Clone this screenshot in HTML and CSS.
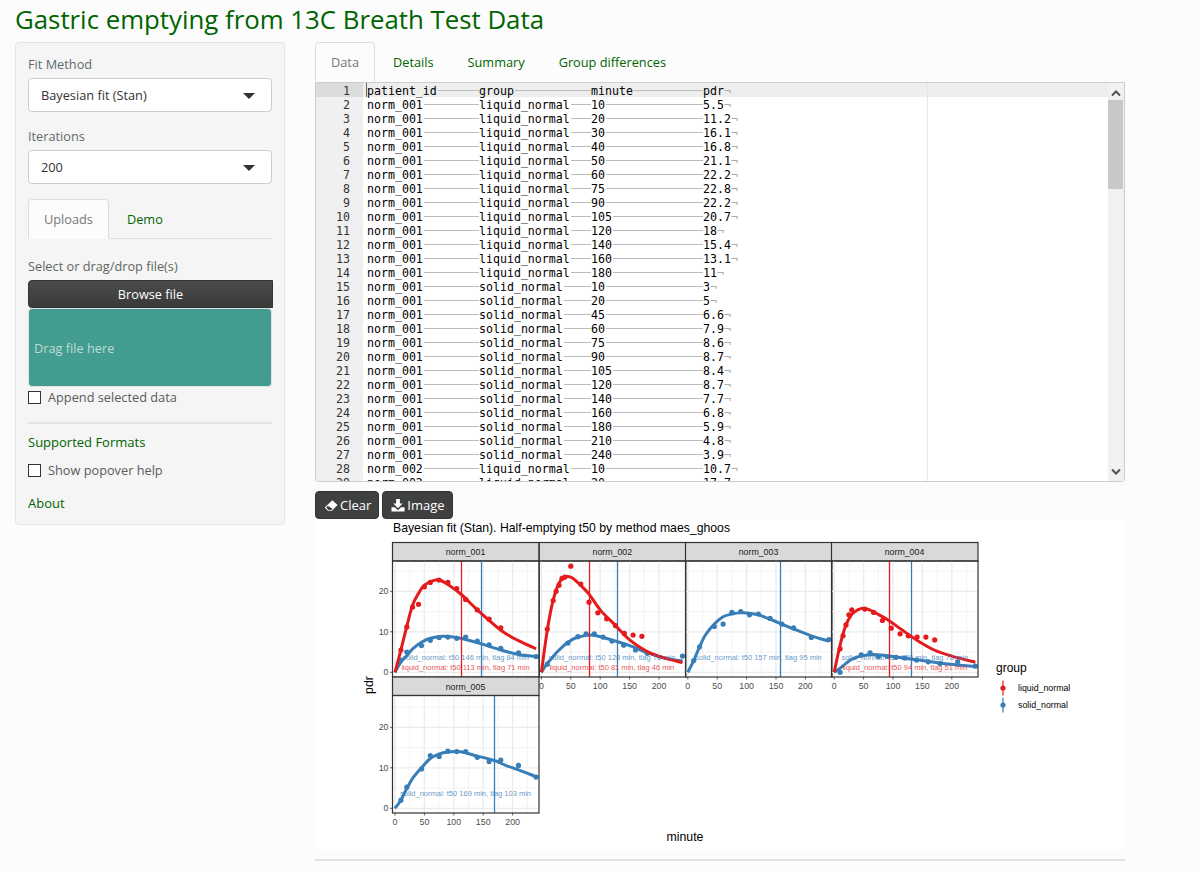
FILE: index.html
```html
<!DOCTYPE html>
<html>

<head>
    <meta charset="utf-8">
    <title>Gastric emptying from 13C Breath Test Data</title>
    <link rel="stylesheet" href="styles.css">
</head>

<body>
    <h2 class="page-title">Gastric emptying from 13C Breath Test Data</h2>

    <div class="layout">
        <div class="well">
            <label class="field-label">Fit Method</label>
            <div class="select-box">Bayesian fit (Stan)</div>

            <label class="field-label">Iterations</label>
            <div class="select-box">200</div>

            <ul class="tabs side-tabs">
                <li class="tab active">Uploads</li>
                <li class="tab">Demo</li>
            </ul>

            <label class="field-label upload-label">Select or drag/drop file(s)</label>
            <button type="button" class="btn browse-btn">Browse file</button>
            <div class="drop-area">Drag file here</div>

            <label class="check-row"><input type="checkbox">Append selected data</label>
            <hr class="side-rule">

            <a class="link formats-link">Supported Formats</a>
            <label class="check-row popover-row"><input type="checkbox">Show popover help</label>
            <a class="link about-link">About</a>
        </div>

        <div class="main">
            <ul class="tabs main-tabs">
                <li class="tab active">Data</li>
                <li class="tab">Details</li>
                <li class="tab">Summary</li>
                <li class="tab">Group differences</li>
            </ul>

            <div class="editor">
                <div class="gutter" id="gutter"></div>
                <div class="code" id="code"></div>
                <div class="print-margin"></div>
                <div class="scrollbar">
                    <svg class="arrow" width="12" height="8" viewBox="0 0 12 8"><path d="M2 6.5L6 2.5L10 6.5" fill="none" stroke="#505050" stroke-width="2" /></svg>
                    <div class="thumb"></div>
                    <svg class="arrow arrow-down" width="12" height="8" viewBox="0 0 12 8"><path d="M2 1.5L6 5.5L10 1.5" fill="none" stroke="#505050" stroke-width="2" /></svg>
                </div>
            </div>

            <div class="plot-actions">
                <button type="button" class="btn action-btn">
                    <svg width="14" height="13" viewBox="0 0 16 14"><path fill="#fff" fill-rule="evenodd" d="M9.5 1L15.5 6.5L9 13H4.5L.8 9.4ZM4.2 7.4L2.6 9.3L5.2 12H8.4L9.8 10.7Z" /></svg>
                    Clear
                </button>
                <button type="button" class="btn action-btn">
                    <svg width="14" height="14" viewBox="0 0 15 15"><path fill="#fff" d="M5.5 1H9.5V6H12.5L7.5 11L2.5 6H5.5ZM.5 10H4L7.5 13L11 10H14.5V14.5H.5Z" /></svg>
                    Image
                </button>
            </div>

            <svg class="plot" id="plot" width="810" height="331" viewBox="315 519 810 331"></svg>
            <hr class="main-rule">
        </div>
    </div>

    <script src="script.js"></script>
</body>

</html>
```

FILE: styles.css
```css
body {
    margin: 0;
    padding: 0 15px;
    background-color: #fcfcfc;
    font-family: "Open Sans", sans-serif;
    font-size: 12.75px;
    line-height: 18px;
    color: #555;
    overflow: hidden;
}

.page-title {
    margin: 5px 0 8px;
    font-size: 25.8px;
    font-weight: 400;
    line-height: 29px;
    color: #006400;
}

.layout {
    display: grid;
    grid-template-columns: 270px 810px;
    column-gap: 30px;
    align-items: start;
}

.well {
    display: flex;
    flex-direction: column;
    align-items: flex-start;
    padding: 12px;
    background-color: #f5f5f5;
    border: 1px solid #e3e3e3;
    border-radius: 4px;
}

.field-label {
    margin-bottom: 5px;
    color: #5d6b70;
}

.select-box {
    box-sizing: border-box;
    position: relative;
    width: 100%;
    height: 34px;
    margin-bottom: 15px;
    padding: 7px 12px;
    background-color: #fff;
    border: 1px solid #ccc;
    border-radius: 4px;
    color: #333;
}

.select-box::after {
    content: "";
    position: absolute;
    top: 14px;
    right: 16px;
    border-left: 6px solid transparent;
    border-right: 6px solid transparent;
    border-top: 6px solid #333;
}

.tabs {
    display: flex;
    box-sizing: border-box;
    width: 100%;
    margin: 0;
    padding: 0;
    list-style: none;
    border-bottom: 1px solid #ddd;
}

.tab {
    padding: 10px 15px;
    margin-bottom: -1px;
    border: 1px solid transparent;
    border-radius: 4px 4px 0 0;
    color: #006400;
    margin-right: 2px;
}

.tab.active {
    background-color: #fcfcfc;
    border-color: #ddd #ddd #fcfcfc;
    color: #777;
}

.side-tabs {
    height: 40px;
}

.upload-label {
    margin-top: 18px;
    color: #5e6660;
}

.btn {
    font-family: "Open Sans", sans-serif;
    font-size: 12.75px;
    color: #fff;
    background-color: #3f4040;
    border: 1px solid #333;
    border-radius: 4px;
    cursor: pointer;
}

.browse-btn {
    width: 245px;
    height: 28px;
    padding: 0;
    border-radius: 4px 0 0 4px;
    background-image: linear-gradient(#4a4b4b, #3a3a3a);
}

.drop-area {
    box-sizing: border-box;
    display: flex;
    align-items: center;
    width: 244px;
    height: 79px;
    margin-bottom: 1px;
    padding-left: 5px;
    background-color: #429c8f;
    border: 1px solid #e3e3e3;
    border-radius: 4px;
    color: #bcdcd6;
}

.check-row {
    display: flex;
    align-items: center;
    gap: 7px;
    color: #5a5a5a;
}

.check-row input {
    appearance: none;
    width: 13px;
    height: 13px;
    margin: 0;
    background-color: #fff;
    border: 1px solid #333;
}

.side-rule {
    width: 100%;
    margin: 16px 0 9px;
    border: none;
    border-top: 2px solid #e3e3e3;
}

.link {
    font-size: 13px;
    color: #006400;
}

.popover-row {
    margin-top: 10px;
}

.about-link {
    margin-top: 15px;
}

.main-tabs {
    height: 40px;
    border-bottom: none;
}

.main-tabs .tab {
    height: 40px;
    box-sizing: border-box;
    margin-bottom: 0;
}

.editor {
    display: flex;
    position: relative;
    box-sizing: border-box;
    height: 400px;
    overflow: hidden;
    background-color: #fff;
    border: 1px solid #ccc;
    border-radius: 0 0 4px 4px;
    font-family: "DejaVu Sans Mono", monospace;
    font-size: 11.6px;
    line-height: 16px;
    color: #000;
}

.gutter {
    flex: 0 0 47px;
    background-color: #f0f0f0;
    color: #333;
    text-align: right;
}

.gutter div {
    height: 14px;
    padding-right: 13px;
}

.gutter .current {
    background-color: #dcdcdc;
}

.code {
    flex: 1;
}

.code-line {
    display: flex;
    height: 14px;
    padding-left: 4px;
    white-space: pre;
}

.code-line.current {
    background: linear-gradient(#666, #666) 3px 0 / 1px 100% no-repeat #eee;
}

.cell {
    display: flex;
    align-items: flex-start;
    flex: 0 0 112px;
}

.cell::after {
    content: "";
    flex: 1;
    margin: 7px 0 0 1px;
    border-top: 1px solid #bcbcbc;
}

.eol {
    color: #aaa;
}

.print-margin {
    position: absolute;
    top: 0;
    bottom: 0;
    left: 611px;
    border-left: 1px solid #e6e6e6;
}

.scrollbar {
    flex: 0 0 16px;
    position: relative;
    background-color: #f1f1f1;
    z-index: 1;
}

.arrow {
    position: absolute;
    top: 6px;
    left: 2px;
}

.arrow-down {
    top: auto;
    bottom: 5px;
}

.thumb {
    position: absolute;
    top: 17px;
    left: 0;
    width: 15px;
    height: 89px;
    background-color: #c8c8c8;
}

.plot-actions {
    display: flex;
    gap: 3px;
    margin-top: 9px;
}

.action-btn {
    display: flex;
    align-items: center;
    gap: 2px;
    height: 28px;
    padding: 0 7px 0 8px;
    font-size: 13px;
}

.plot {
    display: block;
    background-color: #fff;
    font-family: "Liberation Sans", sans-serif;
}

.main-rule {
    margin: 9px 0 0;
    border: none;
    border-top: 2px solid #e3e3e3;
}
```

FILE: script.js
```js
const blocks = [
    ['norm_001', 'liquid_normal', [10, 5.5], [20, 11.2], [30, 16.1], [40, 16.8], [50, 21.1], [60, 22.2], [75, 22.8], [90, 22.2], [105, 20.7], [120, 18], [140, 15.4], [160, 13.1], [180, 11]],
    ['norm_001', 'solid_normal', [10, 3], [20, 5], [45, 6.6], [60, 7.9], [75, 8.6], [90, 8.7], [105, 8.4], [120, 8.7], [140, 7.7], [160, 6.8], [180, 5.9], [210, 4.8], [240, 3.9]],
    ['norm_002', 'liquid_normal', [10, 10.7], [20, 17.7]]
];

const RED = '#e41a1c';
const BLUE = '#377eb8';
const X_SCALE = 0.588;
const Y_SCALE = 4.05;
const PANEL_WIDTH = 146.5;
const STRIP_HEIGHT = 18.5;

const panels = [
    {
        name: 'norm_001', x0: 395, y0: 672.3, left: 392.5, stripTop: 542.5, bottom: 677, yAxis: true,
        liquid: {
            t50: 113, tlag: 71, points: blocks[0].slice(2),
            curve: [[0, 0], [10, 5.5], [20, 11.3], [30, 16.6], [40, 19.5], [50, 21.5], [66, 22.7], [75, 22.8], [90, 21.7], [113, 19.2], [140, 15.4], [180, 10.4], [210, 7.8], [240, 5.8]]
        },
        solid: {
            t50: 146, tlag: 84, points: blocks[1].slice(2),
            curve: [[0, 0], [10, 2.5], [20, 4.1], [30, 5.8], [45, 7.4], [60, 8.4], [80, 8.9], [100, 8.7], [120, 8.1], [150, 6.9], [180, 5.5], [210, 4.4], [240, 3.9]]
        }
    },
    {
        name: 'norm_002', x0: 541.4, y0: 672.3, left: 539.3, stripTop: 542.5, bottom: 677, xAxis: true,
        liquid: {
            t50: 81, tlag: 46,
            points: [[10, 10.7], [20, 17.7], [25, 20], [30, 21.5], [35, 23.2], [40, 23.5], [50, 26.2], [67, 21.8], [81, 17.3], [96, 14.7], [111, 13.2], [126, 11.5], [141, 9.6], [156, 9.2], [171, 8.9]],
            curve: [[0, 0], [10, 10.4], [20, 17.9], [30, 22], [40, 23.5], [50, 23.5], [60, 22.4], [81, 19.3], [100, 15.4], [125, 11.7], [150, 8], [180, 5.1], [210, 3.5], [240, 2.4]]
        },
        solid: {
            t50: 128, tlag: 76,
            points: [[10, 2], [45, 7.2], [62, 8.8], [76, 9.5], [90, 9.5], [105, 8.7], [120, 7.7], [140, 6.7], [160, 5.5], [180, 4.7], [240, 4]],
            curve: [[0, 0], [10, 2.2], [20, 3.9], [30, 5.5], [45, 7.4], [60, 8.6], [85, 9.2], [105, 8.6], [128, 7.6], [150, 6.6], [180, 4.9], [210, 3.5], [240, 2.8]]
        }
    },
    {
        name: 'norm_003', x0: 687.8, y0: 672.3, left: 685.5, stripTop: 542.5, bottom: 677, xAxis: true,
        solid: {
            t50: 157, tlag: 95,
            points: [[10, 2.9], [20, 6.3], [45, 11.3], [60, 11.9], [75, 14.8], [90, 15], [105, 14.2], [120, 14.4], [140, 13.3], [160, 11.9], [180, 11], [210, 8.6], [240, 8.1]],
            curve: [[0, 0], [10, 2.9], [20, 6.3], [30, 9.2], [45, 11.9], [60, 13.7], [75, 14.4], [90, 14.7], [105, 14.6], [120, 14.2], [140, 13.1], [157, 12.1], [180, 10.7], [210, 9], [240, 7.7]]
        }
    },
    {
        name: 'norm_004', x0: 834.2, y0: 672.3, left: 831.5, stripTop: 542.5, bottom: 677, xAxis: true,
        liquid: {
            t50: 94, tlag: 51,
            points: [[10, 5.8], [15, 9], [20, 11.7], [25, 14.2], [30, 15.4], [52, 15.6], [67, 14.8], [82, 12.8], [97, 10.9], [112, 9.5], [126, 9], [141, 8.7], [156, 8.7], [171, 8]],
            curve: [[0, 0], [10, 6.7], [20, 11.7], [30, 14.3], [40, 15.4], [50, 15.8], [60, 15.4], [75, 14.3], [94, 12.7], [115, 10.5], [140, 8], [170, 5.5], [200, 4], [240, 2.5]]
        },
        solid: {
            t50: 130, tlag: 78,
            points: [[10, 0], [46, 4.3], [61, 4.8], [75, 3.9], [90, 3.9], [105, 3.7], [120, 3.5], [140, 3], [160, 2.6], [180, 2.2], [210, 2.6], [240, 1.5]],
            curve: [[0, 0], [10, 1], [20, 2.2], [30, 3.2], [45, 4], [65, 4.4], [90, 4.1], [130, 3.3], [170, 2.5], [210, 1.8], [240, 1.4]]
        }
    },
    {
        name: 'norm_005', x0: 395, y0: 808.3, left: 392.5, stripTop: 677, bottom: 813, xAxis: true, yAxis: true,
        solid: {
            t50: 169, tlag: 103,
            points: [[10, 2], [20, 5.2], [45, 9.7], [60, 13], [75, 12.8], [90, 14.1], [105, 14], [120, 14], [140, 12.6], [160, 11.5], [180, 11.9], [210, 10.6], [240, 7.7]],
            curve: [[0, 0], [10, 2], [20, 4.9], [30, 7.4], [45, 10], [60, 12.3], [75, 13.4], [90, 13.9], [105, 14], [120, 13.7], [140, 12.9], [169, 11.8], [190, 10.5], [210, 9.5], [240, 7.8]]
        }
    }
];

function fillEditor() {
    const rows = [['patient_id', 'group', 'minute', 'pdr']];
    blocks.forEach(function (block) {
        block.slice(2).forEach(function (point) {
            rows.push([block[0], block[1], point[0], point[1]]);
        });
    });

    let gutterHtml = '';
    let codeHtml = '';
    rows.forEach(function (row, i) {
        const current = i === 0 ? ' current' : '';
        gutterHtml += `<div class="${current}">${i + 1}</div>`;
        codeHtml += `<div class="code-line${current}"><span class="cell">${row[0]}</span><span class="cell">${row[1]}</span><span class="cell">${row[2]}</span><span>${row[3]}<span class="eol">¬</span></span></div>`;
    });
    document.getElementById('gutter').innerHTML = gutterHtml;
    document.getElementById('code').innerHTML = codeHtml;
}

// catmull-rom through the hand read curve points
function smoothPath(pts) {
    let d = `M${pts[0][0].toFixed(1)} ${pts[0][1].toFixed(1)}`;
    for (let i = 0; i < pts.length - 1; i++) {
        const p0 = pts[Math.max(i - 1, 0)];
        const p1 = pts[i];
        const p2 = pts[i + 1];
        const p3 = pts[Math.min(i + 2, pts.length - 1)];
        const c1x = p1[0] + (p2[0] - p0[0]) / 6;
        const c1y = p1[1] + (p2[1] - p0[1]) / 6;
        const c2x = p2[0] - (p3[0] - p1[0]) / 6;
        const c2y = p2[1] - (p3[1] - p1[1]) / 6;
        d += `C${c1x.toFixed(1)} ${c1y.toFixed(1)} ${c2x.toFixed(1)} ${c2y.toFixed(1)} ${p2[0].toFixed(1)} ${p2[1].toFixed(1)}`;
    }
    return d;
}

function drawGroup(panel, fit, color) {
    const px = t => panel.x0 + t * X_SCALE;
    const py = v => panel.y0 - v * Y_SCALE;

    const line = fit.curve.map(p => [px(p[0]), py(p[1])]);
    let html = `<path d="${smoothPath(line)}" fill="none" stroke="${color}" stroke-width="3" />`;
    fit.points.forEach(function (p) {
        html += `<circle cx="${px(p[0]).toFixed(1)}" cy="${py(p[1]).toFixed(1)}" r="2.6" fill="${color}" />`;
    });
    const x = Math.round(px(fit.t50)) + 0.5;
    html += `<line x1="${x}" x2="${x}" y1="${panel.stripTop + STRIP_HEIGHT}" y2="${panel.bottom}" stroke="${color}" stroke-width="1.3" />`;
    return html;
}

function drawLabel(panel, fit, color, group, offset) {
    const x = panel.x0 + 120 * X_SCALE;
    return `<text x="${x}" y="${panel.y0 - offset}" text-anchor="middle" font-size="7.5" fill="${color}" fill-opacity="0.8">${group}: t50 ${fit.t50} min, tlag ${fit.tlag} min</text>`;
}

function drawPanel(panel) {
    const top = panel.stripTop + STRIP_HEIGHT;
    const right = panel.left + PANEL_WIDTH;
    let html = '';

    html += `<rect x="${panel.left}" y="${panel.stripTop}" width="${PANEL_WIDTH}" height="${STRIP_HEIGHT}" fill="#d9d9d9" stroke="#333" stroke-width="1.2" />`;
    html += `<text x="${panel.left + 73}" y="${panel.stripTop + 12.5}" text-anchor="middle" font-size="8.8" fill="#1a1a1a">${panel.name}</text>`;

    for (let v = 0; v < 28; v += 5) {
        const y = panel.y0 - v * Y_SCALE;
        const major = v % 10 === 0;
        html += `<line x1="${panel.left}" x2="${right}" y1="${y}" y2="${y}" stroke="${major ? '#ebebeb' : '#f0f0f0'}" stroke-width="${major ? 1.3 : 0.8}" />`;
    }
    for (let t = 0; t <= 225; t += 25) {
        const x = panel.x0 + t * X_SCALE;
        const major = t % 50 === 0;
        html += `<line x1="${x}" x2="${x}" y1="${top}" y2="${panel.bottom}" stroke="${major ? '#ebebeb' : '#f0f0f0'}" stroke-width="${major ? 1.3 : 0.8}" />`;
    }

    if (panel.solid) html += drawGroup(panel, panel.solid, BLUE);
    if (panel.liquid) html += drawGroup(panel, panel.liquid, RED);
    if (panel.solid) html += drawLabel(panel, panel.solid, BLUE, 'solid_normal', 12.5);
    if (panel.liquid) html += drawLabel(panel, panel.liquid, RED, 'liquid_normal', 2.5);

    html += `<rect x="${panel.left}" y="${top}" width="${PANEL_WIDTH}" height="${panel.bottom - top}" fill="none" stroke="#333" stroke-width="1.2" />`;

    if (panel.xAxis) {
        [0, 50, 100, 150, 200].forEach(function (t) {
            const x = panel.x0 + t * X_SCALE;
            html += `<line x1="${x}" x2="${x}" y1="${panel.bottom}" y2="${panel.bottom + 2.5}" stroke="#333" stroke-width="0.8" />`;
            html += `<text x="${x}" y="${panel.bottom + 11.5}" text-anchor="middle" font-size="8.8" fill="#4d4d4d">${t}</text>`;
        });
    }
    if (panel.yAxis) {
        [0, 10, 20].forEach(function (v) {
            const y = panel.y0 - v * Y_SCALE;
            html += `<line x1="${panel.left - 2.5}" x2="${panel.left}" y1="${y}" y2="${y}" stroke="#333" stroke-width="0.8" />`;
            html += `<text x="${panel.left - 4}" y="${y + 3}" text-anchor="end" font-size="8.8" fill="#4d4d4d">${v}</text>`;
        });
    }
    return html;
}

function drawLegend() {
    let html = '<text x="996" y="672" font-size="12" fill="#000">group</text>';
    [['liquid_normal', RED, 688], ['solid_normal', BLUE, 705]].forEach(function (item) {
        html += `<line x1="1003" x2="1003" y1="${item[2] - 7.5}" y2="${item[2] + 7.5}" stroke="${item[1]}" stroke-width="1.2" />`;
        html += `<circle cx="1003" cy="${item[2]}" r="2.6" fill="${item[1]}" />`;
        html += `<text x="1018" y="${item[2] + 3}" font-size="8.8" fill="#000">${item[0]}</text>`;
    });
    return html;
}

function drawPlot() {
    let html = '<rect x="315" y="519" width="810" height="331" fill="#fff" />';
    html += '<text x="393" y="532" font-size="12.25" fill="#000">Bayesian fit (Stan). Half-emptying t50 by method maes_ghoos</text>';
    panels.forEach(function (panel) {
        html += drawPanel(panel);
    });
    html += '<text x="685" y="841" text-anchor="middle" font-size="12.3" fill="#000">minute</text>';
    html += '<text transform="translate(373 685) rotate(-90)" text-anchor="middle" font-size="12.3" fill="#000">pdr</text>';
    html += drawLegend();
    document.getElementById('plot').innerHTML = html;
}

fillEditor();
drawPlot();
```
